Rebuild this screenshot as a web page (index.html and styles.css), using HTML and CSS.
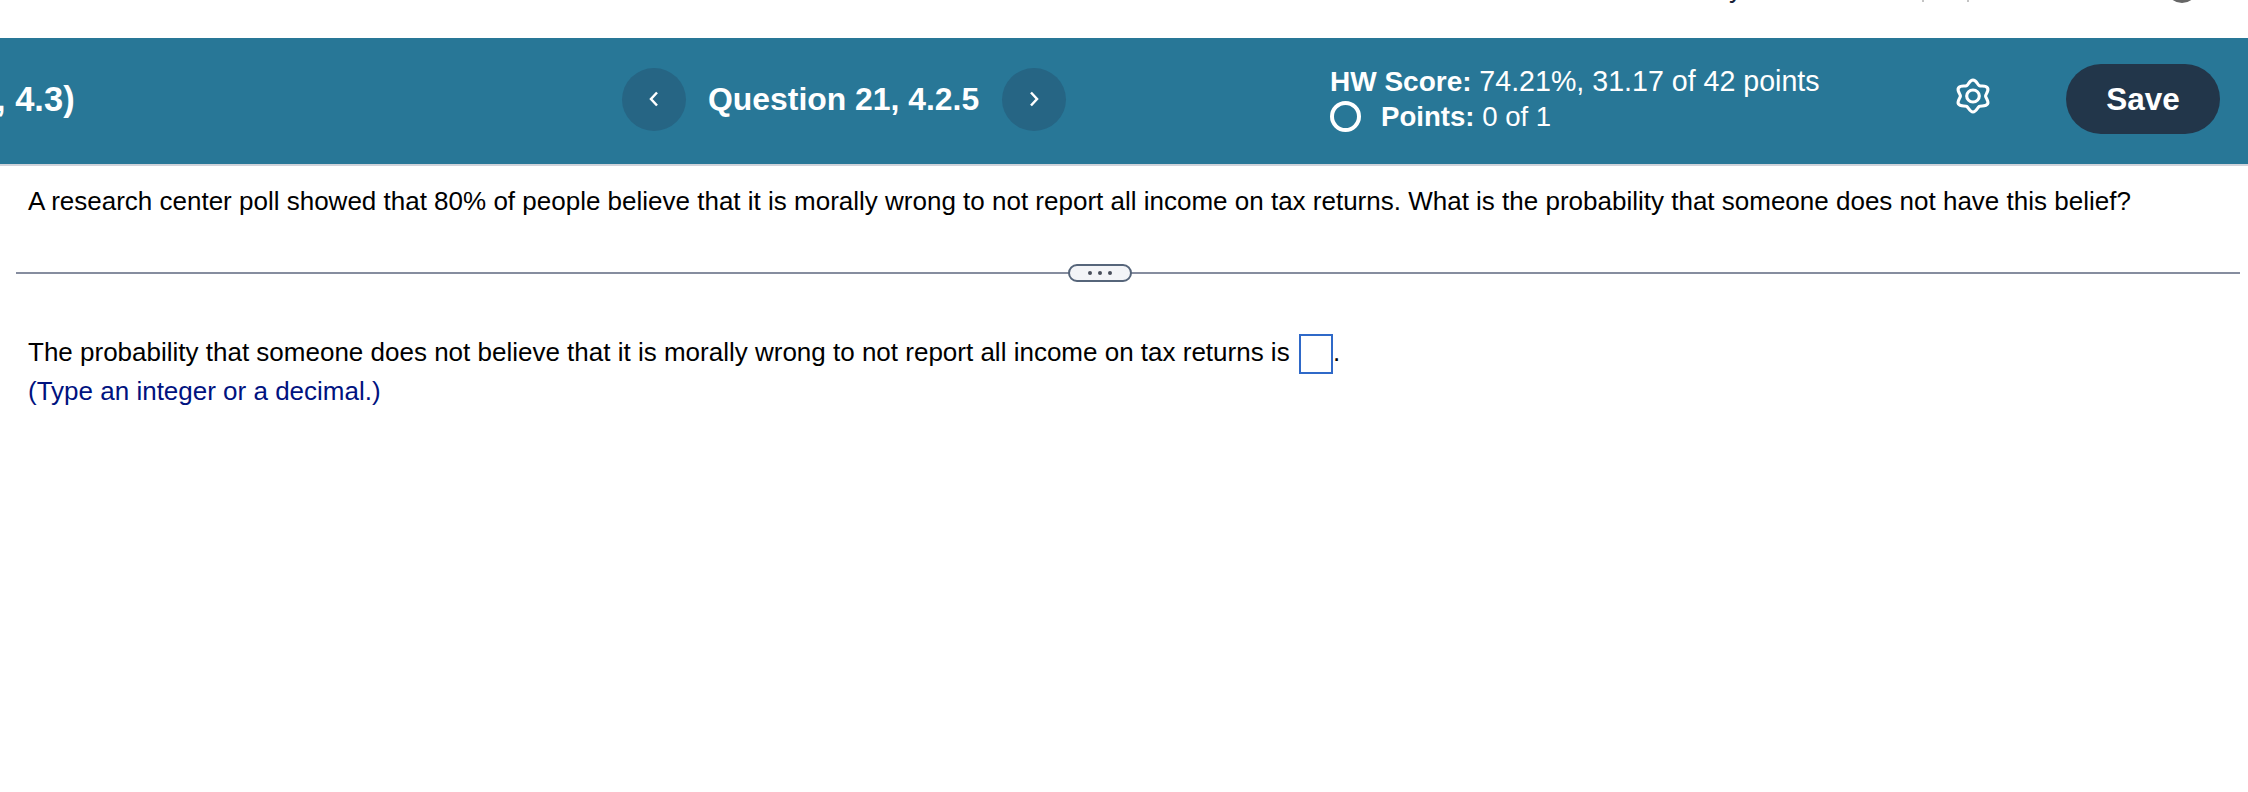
FILE: index.html
```html
<!DOCTYPE html>
<html lang="en">
<head>
    <meta charset="UTF-8">
    <meta name="viewport" content="width=device-width, initial-scale=1.0">
    <title>Question 21, 4.2.5</title>
    <link rel="stylesheet" href="styles.css">
</head>
<body>
    <div class="topstrip">
        <span class="cutname">y</span>
        <span class="cutmark mark-one"></span>
        <span class="cutmark mark-two"></span>
        <span class="cutring"></span>
    </div>

    <header class="bar">
        <div class="section-title">, 4.3)</div>
        <nav class="question-nav">
            <button class="nav-btn" type="button" aria-label="Previous question">
                <svg width="12" height="18" viewBox="0 0 12 18"><path d="M9 2.500 3 9l6 6.500" /></svg>
            </button>
            <span class="question-name">Question 21, 4.2.5</span>
            <button class="nav-btn" type="button" aria-label="Next question">
                <svg width="12" height="18" viewBox="0 0 12 18"><path d="M3 2.500 9 9l-6 6.500" /></svg>
            </button>
        </nav>
        <div class="score">
            <div class="score-line"><b>HW Score:</b> <span class="score-value">74.21%, 31.17 of 42 points</span></div>
            <div class="points"><span class="ring"></span><span><b>Points:</b> 0 of 1</span></div>
        </div>
        <svg class="gear" width="36" height="36" viewBox="-18 -18 36 36" aria-label="Settings">
            <path d="M0-16C3.200-16 4.270-11.390 6-10.390C7.730-9.390 12.260-10.770 13.860-8C15.460-5.230 12-2 12 0C12 2 15.460 5.230 13.860 8C12.260 10.770 7.730 9.390 6 10.390C4.270 11.390 3.200 16 0 16C-3.200 16-4.270 11.390-6 10.390C-7.730 9.390-12.260 10.770-13.860 8C-15.460 5.230-12 2-12 0C-12-2-15.460-5.230-13.860-8C-12.260-10.770-7.730-9.390-6-10.390C-4.270-11.390-3.200-16 0-16Z" />
            <circle r="6" />
        </svg>
        <button class="save-btn" type="button">Save</button>
    </header>

    <main class="question">
        <p class="prompt">A research center poll showed that 80% of people believe that it is morally wrong to not report all income on tax returns. What is the probability that someone does not have this belief?</p>

        <div class="divider">
            <span class="divider-handle"><i></i><i></i><i></i></span>
        </div>

        <div class="answer">
            <p class="answer-line">The probability that someone does not believe that it is morally wrong to not report all income on tax returns is <span class="answer-box"></span>.</p>
            <p class="hint">(Type an integer or a decimal.)</p>
        </div>
    </main>
</body>
</html>
```

FILE: styles.css
```css
* {
    box-sizing: border-box;
}
body {
    margin: 0;
    background-color: #fff;
    color: #000;
    font-family: "Liberation Sans", Arial, sans-serif;
    overflow: hidden;
}
.topstrip {
    height: 38px;
    overflow: hidden;
    display: flex;
    align-items: flex-start;
}
.cutname {
    margin: -27px 0 0 1729px;
    font-size: 27px;
    line-height: 30px;
    color: #1a2238;
}
.cutmark {
    width: 2px;
    height: 2px;
    background-color: #c4c4c4;
}
.mark-one {
    margin-left: 179px;
}
.mark-two {
    margin-left: 43px;
}
.cutring {
    width: 32px;
    height: 32px;
    margin: -29px 0 0 197px;
    border: 3px solid #666;
    border-radius: 50%;
}
.bar {
    height: 128px;
    padding-bottom: 4px;
    display: flex;
    align-items: center;
    background-color: #287797;
    border-bottom: 2px solid #d0d3da;
    color: #fff;
}
.section-title {
    width: 626px;
    margin-left: -4px;
    font-size: 34.5px;
    font-weight: bold;
    white-space: nowrap;
}
.question-nav {
    width: 708px;
    display: flex;
    align-items: center;
}
.nav-btn {
    width: 64px;
    height: 63px;
    padding: 0;
    display: flex;
    align-items: center;
    justify-content: center;
    background-color: #266584;
    border: 0;
    border-radius: 50%;
}
.nav-btn path {
    fill: none;
    stroke: #fff;
    stroke-width: 2.5;
}
.question-name {
    margin: 0 23px 0 22px;
    padding-top: 1px;
    font-size: 31.9px;
    font-weight: bold;
    white-space: nowrap;
}
.score {
    width: 624.5px;
    font-size: 28px;
    line-height: 35px;
}
.score-value {
    font-size: 28.6px;
}
.points {
    display: flex;
    align-items: center;
    gap: 20px;
    font-size: 27.6px;
}
.ring {
    width: 31px;
    height: 31px;
    border: 4px solid #fff;
    border-radius: 50%;
}
.gear {
    flex: none;
    margin-bottom: 7px;
    transform: scaleX(1.05);
}
.gear path,
.gear circle {
    fill: none;
    stroke: #fff;
    stroke-width: 3;
}
.save-btn {
    width: 154px;
    height: 70px;
    margin-left: 75.5px;
    padding-top: 2px;
    background-color: #22364a;
    color: #fff;
    border: 0;
    border-radius: 35px;
    font-family: inherit;
    font-size: 31.5px;
    font-weight: bold;
}
.question {
    padding-top: 17px;
}
.prompt {
    margin: 0 0 0 28px;
    font-size: 26px;
    line-height: 36px;
    white-space: nowrap;
}
.divider {
    height: 20px;
    margin: 44px 8px 0 16px;
    display: flex;
    align-items: center;
    justify-content: center;
    background: linear-gradient(#868d9f, #868d9f) center / 100% 2px no-repeat;
}
.divider-handle {
    width: 64px;
    height: 18px;
    margin-right: 56px;
    display: flex;
    align-items: center;
    justify-content: center;
    gap: 6px;
    background-color: #f3f4f7;
    border: 2px solid #56657a;
    border-radius: 9px;
}
.divider-handle i {
    width: 4px;
    height: 4px;
    background-color: #4a4f5c;
    border-radius: 50%;
}
.answer {
    margin: 49px 0 0 28px;
    font-size: 26px;
}
.answer-line {
    margin: 0;
    height: 40px;
    line-height: 40px;
    white-space: nowrap;
}
.answer-box {
    display: inline-block;
    width: 34px;
    height: 40px;
    margin-left: 2px;
    vertical-align: middle;
    border: 2px solid #2f69c8;
}
.hint {
    margin: 0;
    line-height: 38px;
    color: #00127f;
}
```
